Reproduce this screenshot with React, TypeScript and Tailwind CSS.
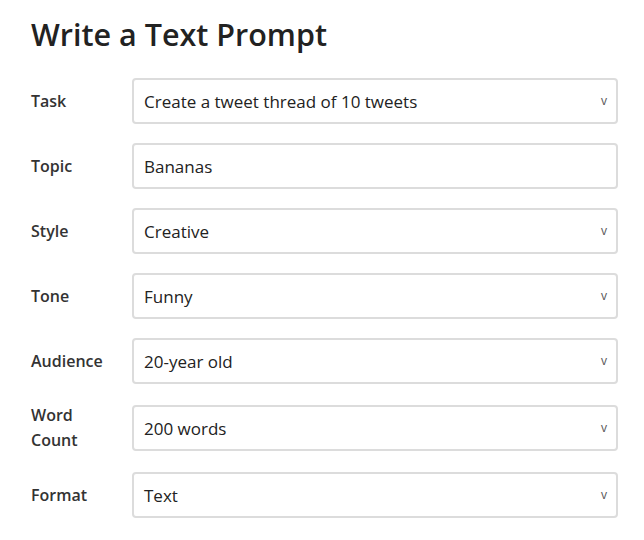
const rows: { label: string; value: string; select: boolean }[] = [
  { label: 'Task', value: 'Create a tweet thread of 10 tweets', select: true },
  { label: 'Topic', value: 'Bananas', select: false },
  { label: 'Style', value: 'Creative', select: true },
  { label: 'Tone', value: 'Funny', select: true },
  { label: 'Audience', value: '20-year old', select: true },
  { label: 'Word Count', value: '200 words', select: true },
  { label: 'Format', value: 'Text', select: true },
];

export default function App() {
  return (
    <div className="min-h-[540px] w-[644px] bg-white pl-[31px] pr-[26px] pt-[14px] font-['Open_Sans',sans-serif] text-[#222]">
      <h1 className="text-[30.5px] font-semibold leading-[40px]">Write a Text Prompt</h1>
      <div className="mt-[24px] flex flex-col gap-[19px]">
        {rows.map((row) => (
          <div key={row.label} className="flex items-center">
            <div className="w-[101px] pr-[14px] text-[16px] font-semibold leading-[25px] text-[#333]">{row.label}</div>
            <div className="flex h-[46px] flex-1 items-center justify-between rounded-[4px] border-2 border-[#dcdcdc] pl-[10px] pr-[9px]">
              <span className="text-[17px] leading-none">{row.value}</span>
              {row.select && <span className="text-[12px] leading-none text-[#555]">v</span>}
            </div>
          </div>
        ))}
      </div>
    </div>
  );
}
